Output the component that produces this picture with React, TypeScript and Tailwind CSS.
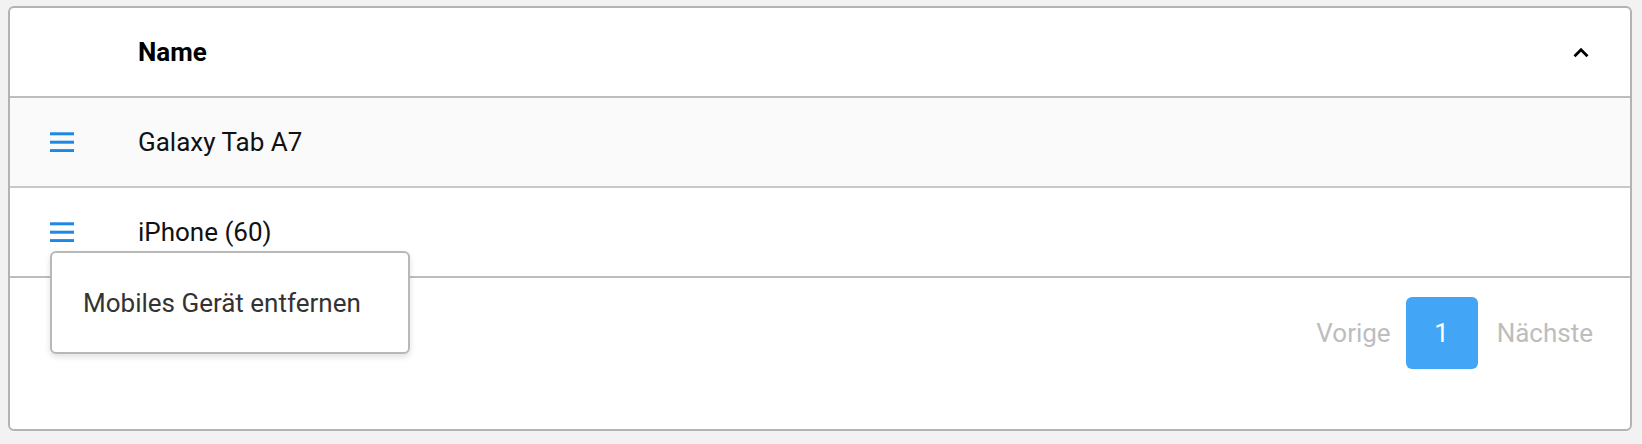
import React from "react";

const Hamburger = () => (
  <svg width="24" height="20" viewBox="0 0 24 20" className="block">
    <rect x="0" y="0.3" width="24" height="3" fill="#1e88e5" />
    <rect x="0" y="8.7" width="24" height="3" fill="#1e88e5" />
    <rect x="0" y="17.1" width="24" height="3" fill="#1e88e5" />
  </svg>
);

const Chevron = () => (
  <svg width="16" height="11" viewBox="0 0 16 11" className="block">
    <path d="M1.5 9.2 L8 2.8 L14.5 9.2" fill="none" stroke="#000" strokeWidth="2.8" />
  </svg>
);

export default function App() {
  return (
    <div className="w-[1642px] h-[444px] bg-[#f2f2f2] pt-[6px] pl-[8px] font-[family-name:Roboto,sans-serif]">
      <div className="relative w-[1624px] h-[425px] bg-white border-2 border-[#b3b3b3] rounded-[6px] flex flex-col">
        {/* Header */}
        <div className="h-[90px] shrink-0 border-b-2 border-[#bdbdbd] flex items-center">
          <div className="w-[128px] shrink-0" />
          <div className="flex-1 text-[26px] font-bold text-black leading-none">Name</div>
          <div className="pr-[41px]">
            <Chevron />
          </div>
        </div>
        {/* Row 1 */}
        <div className="h-[90px] shrink-0 border-b-2 border-[#c8c8c8] bg-[#fafafa] flex items-center">
          <div className="w-[128px] shrink-0 pl-[40px]">
            <Hamburger />
          </div>
          <div className="flex-1 text-[26px] text-[#111] leading-none">Galaxy Tab A7</div>
        </div>
        {/* Row 2 */}
        <div className="h-[90px] shrink-0 border-b-2 border-[#bdbdbd] bg-white flex items-center">
          <div className="w-[128px] shrink-0 pl-[40px]">
            <div className="relative w-[24px]">
              <Hamburger />
              <div className="absolute left-0 top-full mt-[9px] z-10 w-[360px] h-[103px] bg-white border-2 border-[#b8b8b8] rounded-[6px] shadow-[0_3px_6px_rgba(0,0,0,0.12)] flex items-center pl-[31px]">
                <span className="text-[26px] text-[#333] whitespace-nowrap leading-none">Mobiles Gerät entfernen</span>
              </div>
            </div>
          </div>
          <div className="flex-1 text-[26px] text-[#111] leading-none">iPhone (60)</div>
        </div>
        {/* Pagination */}
        <div className="flex justify-end items-center pt-[19px] pr-[37px]">
          <span className="text-[26px] text-[#bdbdbd] leading-none mr-[15px]">Vorige</span>
          <div className="w-[72px] h-[72px] rounded-[6px] bg-[#42a5f5] text-white text-[26px] leading-none flex items-center justify-center">1</div>
          <span className="text-[26px] text-[#bdbdbd] leading-none ml-[19px]">Nächste</span>
        </div>
      </div>
    </div>
  );
}
